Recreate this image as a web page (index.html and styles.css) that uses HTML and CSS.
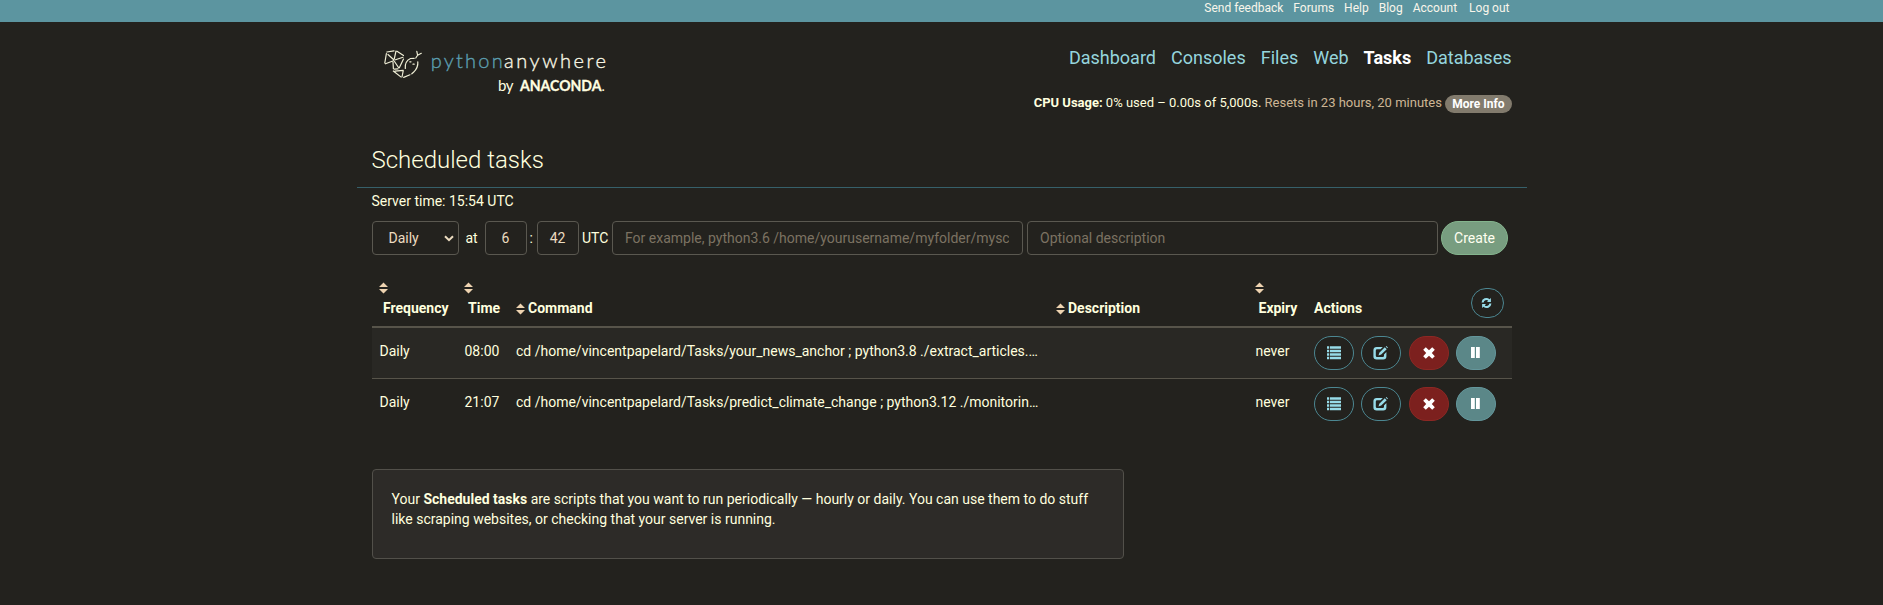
FILE: index.html
```html
<!DOCTYPE html>
<html lang="en">
<head>
<meta charset="utf-8">
<title>Scheduled tasks : PythonAnywhere</title>
<link rel="stylesheet" href="styles.css">
</head>
<body>
<svg class="defs" width="0" height="0" aria-hidden="true">
  <symbol id="i-sort" viewBox="0 0 9 12"><path d="M4.5 0.5L9 5H0zM4.5 11.5L9 7H0z"/></symbol>
  <symbol id="i-list" viewBox="0 0 14 14"><path d="M0 .3h2.2v2.4H0zM3 .3h11v2.4H3zM0 3.8h2.2v2.4H0zM3 3.8h11v2.4H3zM0 7.3h2.2v2.4H0zM3 7.3h11v2.4H3zM0 10.8h2.2v2.4H0zM3 10.8h11v2.4H3z"/></symbol>
  <symbol id="i-edit" viewBox="0 0 15 14"><path d="M9.8 1H3.6A3.2 3.2 0 0 0 .4 4v6.2a3.2 3.2 0 0 0 3.2 3.2h6.6a3.2 3.2 0 0 0 3.2-3.2V6L11 8.4V9.7A1.3 1.3 0 0 1 9.7 11H4.1a1.3 1.3 0 0 1-1.3-1.3V4.6A1.3 1.3 0 0 1 4.1 3.3h3.4zM11.8 1.3l1.9 1.9L8.2 8.6l-2.7.8.8-2.6zM12.7.5l.7-.5 1.5 1.5-.6.7z"/></symbol>
  <symbol id="i-remove" viewBox="0 0 12 12"><path d="M2.8.2L6 3.2 9.2.2l2.6 2.6L8.8 6l3 3.2-2.6 2.6L6 8.8l-3.2 3L.2 9.2l3-3.2-3-3.2z"/></symbol>
  <symbol id="i-pause" viewBox="0 0 9 11"><path d="M0 0h3.8v11H0zM5 0h3.8v11H5z"/></symbol>
  <symbol id="i-refresh" viewBox="0 0 12 12"><path d="M.6 5.4A5.2 5.2 0 0 1 9.3 1.9L10.8.6V5H6.6l1.3-1.6A3.1 3.1 0 0 0 2.9 5.4zM11.4 6.6a5.2 5.2 0 0 1-8.7 3.5L1.2 11.4V7h4.2L4.1 8.6a3.1 3.1 0 0 0 5-2z"/></symbol>
</svg>
<div class="topbar">
  <nav class="container toplinks"><a>Send feedback</a><a>Forums</a><a>Help</a><a>Blog</a><a>Account</a><a class="logout">Log out</a></nav>
</div>
<header class="container header">
  <svg class="logo" width="236" height="56" viewBox="372 40 236 56">
    <g class="snake" fill="none">
      <path d="M386.8 52L394 50.8M386.4 53.5L384.8 63M385.5 63.8L393.5 60.8M388 54.5L394 60M396 51L394.3 58.8M397 51.3L403.5 55.5M395.5 59.8L403 57.3M393 62L393.4 68.7M394.5 61.5L398.5 67.5M399.3 67.8L403.5 59M394.3 69.2L398 68.8M393.3 71L400.8 76.9M395 71.2L403.2 70.3M403.2 71L402 77"/>
      <path d="M405.3 68.5C404.8 64 407 60.2 410.5 58.5L414.2 58.3M417.8 61.8C418.2 66 416.5 69.5 413.5 72.3L411.8 73.8M410 74.8L403.7 77.4M415.8 58L417.6 55.2 416.8 51.4M417.6 55.2L421.3 53.3"/>
      <path d="M409.8 61.8h1.2M413 64.2h1.2"/>
    </g>
    <text class="l-py" x="430.7" y="67.5" textLength="72">python</text>
    <text class="l-any" x="504" y="67.5" textLength="102">anywhere</text>
    <text class="l-by" x="498" y="90.7" textLength="15.5">by</text>
    <text class="l-ana" x="520" y="90.7" textLength="81.5" lengthAdjust="spacingAndGlyphs">ANACONDA</text>
    <text class="l-dot" x="601.5" y="90.7">.</text>
  </svg>
  <div class="header-right">
    <nav class="mainnav"><a>Dashboard</a><a>Consoles</a><a>Files</a><a>Web</a><a class="active">Tasks</a><a>Databases</a></nav>
    <div class="cpu"><b>CPU Usage:</b> 0% used – 0.00s of 5,000s. <span class="muted">Resets in 23 hours, 20 minutes</span> <span class="badge">More Info</span></div>
  </div>
</header>
<main class="container">
  <h1>Scheduled tasks</h1>
  <p class="server">Server time: 15:54 UTC</p>
  <form class="taskform">
    <span class="field select">Daily<svg width="10" height="7" viewBox="0 0 10 7"><path d="M1 1.2l4 4 4-4" fill="none" stroke="currentColor" stroke-width="2"/></svg></span>
    <span class="lbl at">at</span>
    <span class="field num hour">6</span>
    <span class="lbl colon">:</span>
    <span class="field num">42</span>
    <span class="lbl utc">UTC</span>
    <input class="field text" placeholder="For example, python3.6 /home/yourusername/myfolder/myscript.py">
    <input class="field text desc" placeholder="Optional description">
    <span class="create">Create</span>
  </form>
  <table>
    <colgroup><col class="c1"><col class="c2"><col class="c3"><col class="c4"><col class="c5"><col class="c6"></colgroup>
    <thead><tr>
      <th><svg class="sort up"><use href="#i-sort"/></svg><span class="in">Frequency</span></th>
      <th><svg class="sort up"><use href="#i-sort"/></svg><span class="in">Time</span></th>
      <th><svg class="sort"><use href="#i-sort"/></svg>Command</th>
      <th><svg class="sort"><use href="#i-sort"/></svg>Description</th>
      <th><svg class="sort up"><use href="#i-sort"/></svg><span class="in">Expiry</span></th>
      <th><div class="acthead">Actions<span class="btn small"><svg width="11" height="12"><use href="#i-refresh"/></svg></span></div></th>
    </tr></thead>
    <tbody>
      <tr class="odd"><td>Daily</td><td>08:00</td><td>cd /home/vincentpapelard/Tasks/your_news_anchor ; python3.8 ./extract_articles.…</td><td></td><td class="exp">never</td>
        <td class="act"><div class="actions"><span class="btn"><svg width="14" height="14"><use href="#i-list"/></svg></span><span class="btn"><svg width="15" height="14"><use href="#i-edit"/></svg></span><span class="btn red"><svg width="12" height="12"><use href="#i-remove"/></svg></span><span class="btn teal"><svg width="9" height="11"><use href="#i-pause"/></svg></span></div></td></tr>
      <tr><td>Daily</td><td>21:07</td><td>cd /home/vincentpapelard/Tasks/predict_climate_change ; python3.12 ./monitorin…</td><td></td><td class="exp">never</td>
        <td class="act"><div class="actions"><span class="btn"><svg width="14" height="14"><use href="#i-list"/></svg></span><span class="btn"><svg width="15" height="14"><use href="#i-edit"/></svg></span><span class="btn red"><svg width="12" height="12"><use href="#i-remove"/></svg></span><span class="btn teal"><svg width="9" height="11"><use href="#i-pause"/></svg></span></div></td></tr>
    </tbody>
  </table>
  <div class="well">Your <b>Scheduled tasks</b> are scripts that you want to run periodically — hourly or daily. You can use them to do stuff like scraping websites, or checking that your server is running.</div>
</main>
</body>
</html>
```
FILE: styles.css
```css
* { box-sizing: border-box; }
body { margin: 0; background: #23221e; color: #ffffdf; font: 14px/20px Roboto, sans-serif; overflow: hidden; }
.defs { display: block; height: 0; }
svg { fill: currentColor; }
.container { width: 1170px; margin: 0 auto; padding: 0 15px; }
.topbar { background: #5c95a0; height: 22px; }
.toplinks { display: flex; justify-content: flex-end; gap: 10px; padding-right: 17px; font-size: 12px; line-height: 16px; color: #f9f5eb; }
.logout { margin-left: 2px; }
.header { display: flex; justify-content: space-between; height: 118px; padding-top: 18px; }
.logo { flex: none; }
.snake { stroke: #efeed6; stroke-width: 1.2; stroke-linecap: round; }
.logo text { font-family: Lato, sans-serif; }
.l-py { fill: #5c9fb1; stroke: #5c9fb1; }
.l-any { fill: #f8f7e4; stroke: #f8f7e4; }
.l-py, .l-any { font-size: 20px; font-weight: 300; stroke-width: .35; }
.l-by { fill: #fffee0; font-size: 15px; }
.l-ana { fill: #fffee0; font-size: 14.5px; font-weight: 700; stroke: #fffee0; stroke-width: .3; }
.l-dot { fill: #fffee0; font-size: 14px; }
.header-right { display: flex; flex-direction: column; align-items: flex-end; }
.mainnav { display: flex; gap: 15px; font-size: 18px; line-height: 20px; margin-top: 8px; color: #95d5dd; }
.mainnav .active { color: #fff; font-weight: 700; }
.cpu { font-size: 13px; line-height: 20px; margin-top: 25px; }
.muted { color: #cdb695; }
.badge { display: inline-block; background: #827b6d; color: #fff; font-weight: 700; font-size: 12px; line-height: 12px; padding: 3px 7px; border-radius: 10px; vertical-align: middle; }
h1 { margin: 0 -15px; padding: 5px 15px 0; height: 48px; font-size: 24px; line-height: 30px; font-weight: 300; border-bottom: 1px solid #36606a; }
.server { margin: 3px 0 10px; }
.taskform { display: flex; height: 34px; width: 1137px; line-height: 32px; margin: 0; }
.field { border: 1px solid #5a5850; border-radius: 4px; color: #ecdcc0; background: transparent; height: 34px; flex: none; }
.select { width: 87px; padding: 0 4px 0 16px; display: flex; justify-content: space-between; align-items: center; }
.lbl { line-height: 34px; flex: none; }
.at { width: 26px; padding-left: 7px; }
.num { width: 42px; text-align: center; }
.colon { width: 10px; padding-left: 3px; }
.utc { width: 33px; padding-left: 3.5px; }
input.text { width: 411px; padding: 0 12.5px; font: 14px/20px Roboto, sans-serif; outline: 0; }
input.desc { margin: 0 3px 0 4px; }
input::placeholder { color: #7c7262; opacity: 1; }
.create { width: 67px; height: 34px; border-radius: 17px; border: 1px solid #84b48d; background: #789d80; color: #fffff0; text-align: center; line-height: 32px; padding-left: 1px; flex: none; }
table { border-collapse: separate; border-spacing: 0; table-layout: fixed; width: 1140px; margin-top: 15px; }
.c1 { width: 85px; } .c2 { width: 51.5px; } .c3 { width: 540px; } .c4 { width: 199px; } .c5 { width: 59px; }
th { text-align: left; height: 58px; vertical-align: bottom; padding: 0 8px 8px; border-bottom: 2px solid #57544a; white-space: nowrap; }
th .in { padding-left: 3.5px; }
.sort { width: 9px; height: 12px; color: #eed3b0; vertical-align: -2px; margin-right: 3px; }
.sort.up { display: block; margin: 0 0 4px -.5px; }
td { height: 50px; padding: 13px 8px 0; vertical-align: top; white-space: nowrap; line-height: 20px; }
.odd td { height: 51px; background: #292824; border-bottom: 1px solid #57544a; }
td.act { padding-top: 6px; }
td.exp { padding-left: 8.5px; }
.actions { display: flex; gap: 7px; padding-top: 2px; }
.btn { display: flex; align-items: center; justify-content: center; width: 40px; height: 34px; border: 1px solid #4c8792; border-radius: 17px; color: #97dbe8; background: #23221e; flex: none; }
.btn.red { background: #7c201e; border-color: #8c2824; color: #fff; margin-left: 1px; }
.btn.teal { background: #5b8788; border-color: #64979c; color: #fff; }
.btn svg { margin: -1px 1px 0 0; }
.acthead { display: flex; justify-content: space-between; align-items: flex-end; }
.small { width: 33px; height: 30px; border-radius: 15px; }
.well { width: 752px; height: 90px; margin-top: 40px; padding: 19px; border: 1px solid #52504a; border-radius: 4px; background: #2d2b28; }
```
